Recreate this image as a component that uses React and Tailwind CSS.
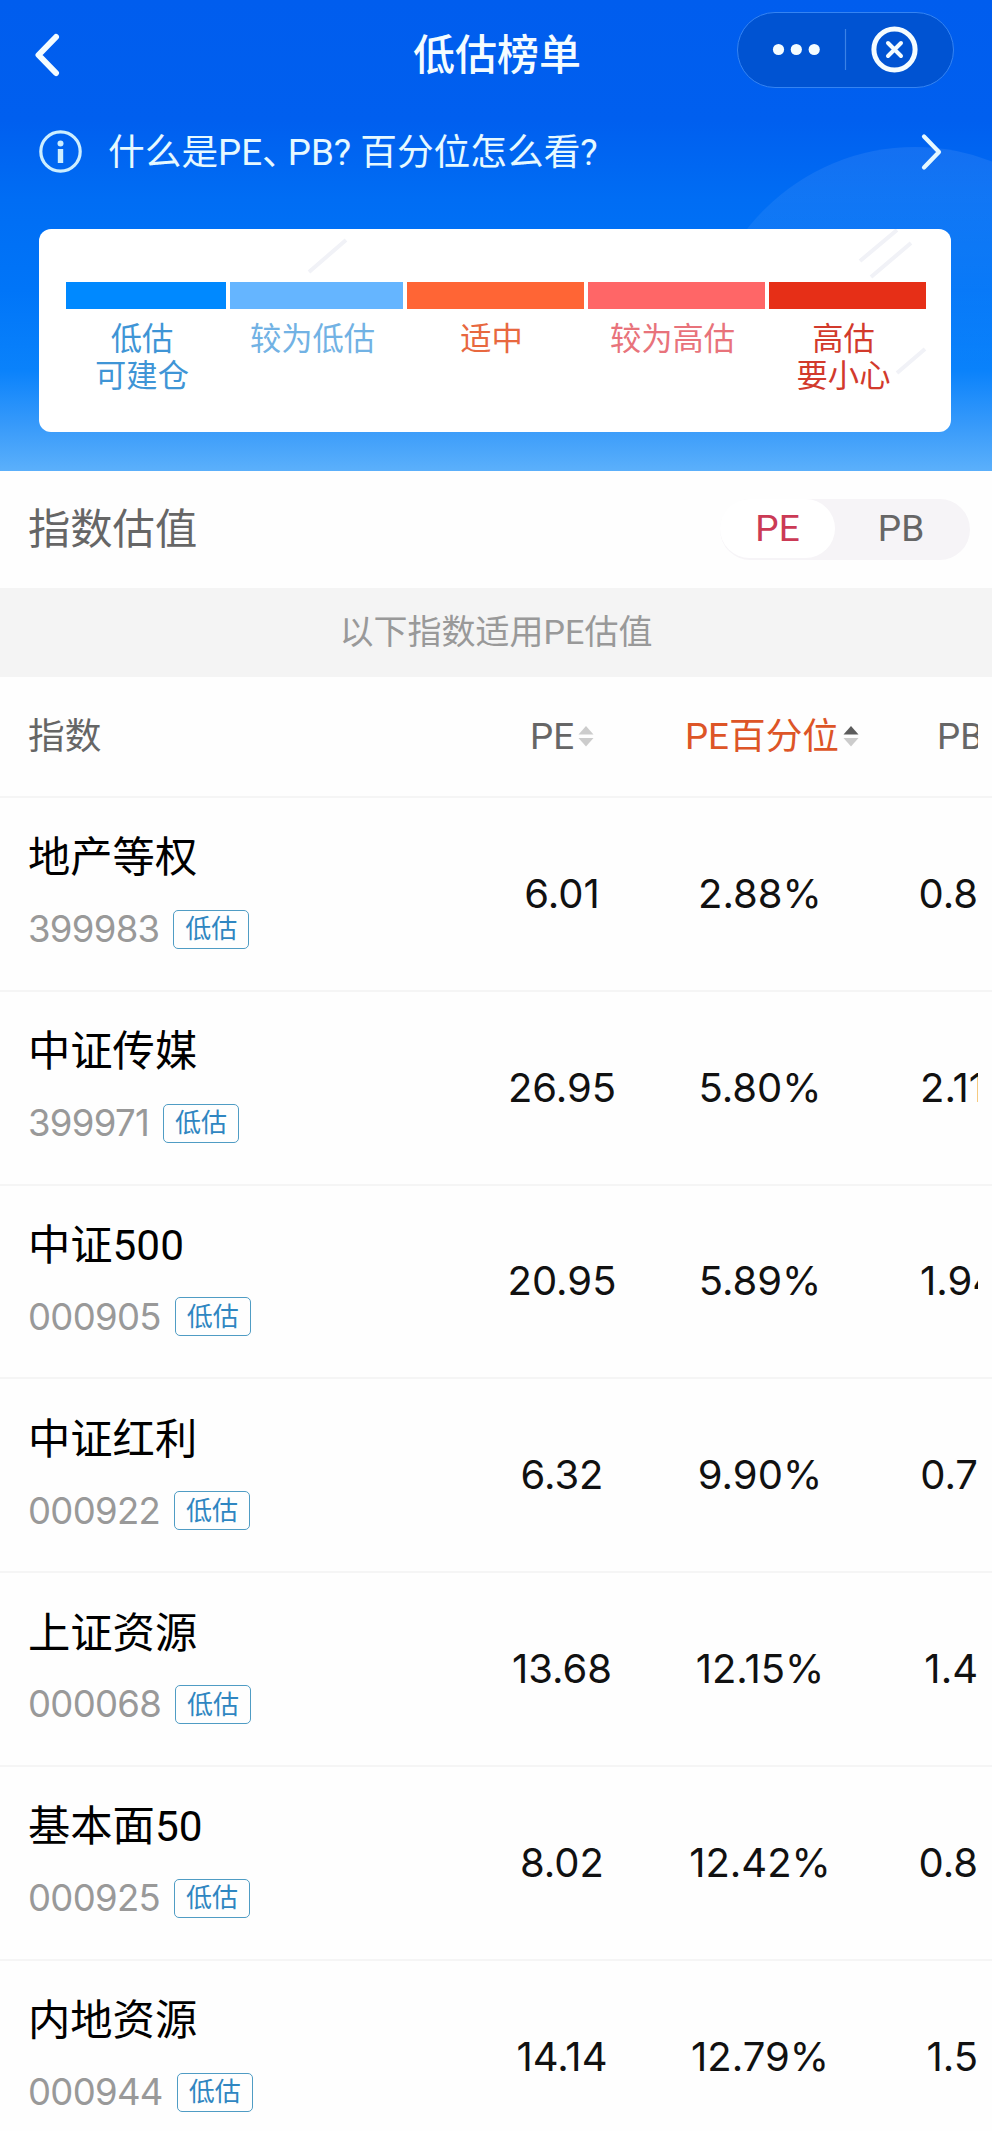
import React, { useState } from "react";

const levels = [
  { bar: "w-[160px] bg-[#0089ff]", text: "text-[#3f95d6]", label: ["低估", "可建仓"] },
  { bar: "w-[173px] bg-[#65b5ff]", text: "text-[#72b2e4]", label: ["较为低估"] },
  { bar: "w-[177px] bg-[#ff6535]", text: "text-[#e8683f]", label: ["适中"] },
  { bar: "w-[177px] bg-[#ff6667]", text: "text-[#e8737b]", label: ["较为高估"] },
  { bar: "w-[157px] bg-[#e62f17]", text: "text-[#d23a2c]", label: ["高估", "要小心"] },
];

const rows = [
  { name: "地产等权", code: "399983", pe: "6.01", percent: "2.88%", pb: "0.8" },
  { name: "中证传媒", code: "399971", pe: "26.95", percent: "5.80%", pb: "2.11" },
  { name: "中证500", code: "000905", pe: "20.95", percent: "5.89%", pb: "1.94" },
  { name: "中证红利", code: "000922", pe: "6.32", percent: "9.90%", pb: "0.7" },
  { name: "上证资源", code: "000068", pe: "13.68", percent: "12.15%", pb: "1.4" },
  { name: "基本面50", code: "000925", pe: "8.02", percent: "12.42%", pb: "0.8" },
  { name: "内地资源", code: "000944", pe: "14.14", percent: "12.79%", pb: "1.5" },
];

const SortArrows = ({ up }) => (
  <svg width="16" height="21" viewBox="0 0 16 21" className="flex-none">
    <path d="M8 0L15.5 8.5H0.5Z" fill={up ? "#5c5c5c" : "#cccccc"} />
    <path d="M8 20.5L15.5 12H0.5Z" fill="#cccccc" />
  </svg>
);

const TopBar = () => (
  <div className="relative flex h-[100px] justify-between pt-3 pr-[38px] pl-[34px]">
    <svg width="26" height="44" viewBox="0 0 26 44" className="mt-[21px]">
      <path
        d="M22 4L4.5 22L22 40"
        fill="none"
        stroke="#f4fcff"
        strokeWidth="6"
        strokeLinecap="round"
        strokeLinejoin="round"
      />
    </svg>
    <div className="absolute inset-x-0 top-[26px] text-center text-[42px] leading-[60px] font-medium">
      <span className="relative left-px">低估榜单</span>
    </div>
    <div className="flex h-[76px] w-[217px] items-center rounded-full border border-[#3584f2] bg-[#0053d2]">
      <svg width="215" height="74" viewBox="0 0 215 74">
        <g fill="#f4fcff">
          <circle cx="40.5" cy="36.5" r="5.6" />
          <circle cx="58.3" cy="36.5" r="5.6" />
          <circle cx="76.2" cy="36.5" r="5.6" />
        </g>
        <path d="M107.5 16V57" stroke="#3b82e6" strokeWidth="1.2" />
        <circle cx="156.5" cy="36.5" r="20.6" fill="none" stroke="#f4fcff" strokeWidth="5" />
        <path
          d="M150 30L163 43M163 30L150 43"
          stroke="#f4fcff"
          strokeWidth="4"
          strokeLinecap="round"
        />
      </svg>
    </div>
  </div>
);

const HelpLink = () => (
  <div className="flex h-[129px] items-start pr-[49px] pl-[38px]">
    <svg width="45" height="45" viewBox="0 0 45 45" className="mt-[29px]">
      <circle cx="22.5" cy="22.5" r="19.7" fill="none" stroke="#cdeeff" strokeWidth="3.2" />
      <circle cx="22.5" cy="14.5" r="3" fill="#cdeeff" />
      <path d="M22.5 20V34" stroke="#cdeeff" strokeWidth="5.4" />
    </svg>
    <div className="mt-[27px] ml-[25px] text-[36.7px] leading-[52px] whitespace-nowrap text-[#e6f9ff]">
      什么是PE<span className="-mr-[11px]">、</span>PB? 百分位怎么看?
    </div>
    <svg width="24" height="40" viewBox="0 0 24 40" className="mt-[32px] ml-auto">
      <path
        d="M5 4.5L20 20L5 35.5"
        fill="none"
        stroke="#e6f9ff"
        strokeWidth="4.2"
        strokeLinecap="round"
        strokeLinejoin="round"
      />
    </svg>
  </div>
);

const LevelCard = () => (
  <div className="relative mx-auto h-[203px] w-[912px] -translate-x-px rounded-xl bg-white pt-[53px] pl-[27px]">
    <svg className="absolute top-0 left-0" width="912" height="203" viewBox="0 0 912 203">
      <g stroke="#f1f2f7" strokeWidth="4">
        <path d="M270 43L307 11M821 32L858 1M832 48L872 14M858 144L886 120" />
      </g>
    </svg>
    <div className="relative flex gap-1">
      {levels.map((l) => (
        <div key={l.label[0]} className={`flex-none ${l.text}`}>
          <div className={`h-[27px] ${l.bar}`}></div>
          <div className="-ml-2 pt-3 text-center text-[31.3px] leading-[37px]">
            {l.label.map((t) => (
              <div key={t}>{t}</div>
            ))}
          </div>
        </div>
      ))}
    </div>
  </div>
);

const IndexRow = ({ row }) => (
  <div className="flex h-[193.8px] items-center border-t-2 border-[#f5f5f5] pr-[14px] pl-7">
    <div className="w-[434px] flex-none">
      <div className="text-[42.3px] leading-[60px] whitespace-nowrap text-black">{row.name}</div>
      <div className="mt-[11px] flex h-[60px] items-center gap-[14px]">
        <span className="font-[Inter] text-[36.5px] leading-none tracking-[-0.7px] text-[#999]">
          {row.code}
        </span>
        <span className="flex h-[39px] w-[76px] items-center justify-center rounded-[5px] border-[1.5px] border-[#4f9cc4] text-[26px] leading-none text-[#2f86c1]">
          低估
        </span>
      </div>
    </div>
    <div className="w-[200px] flex-none text-center font-[Inter] text-[40px] text-[#111]">{row.pe}</div>
    <div className="w-[196px] flex-none text-center font-[Inter] text-[40px] text-[#111]">
      {row.percent}
    </div>
    <div
      className={`ml-auto flex w-[58px] overflow-hidden font-[Inter] text-[40px] text-[#111] ${
        row.pb.length > 3 ? "justify-start" : "justify-end"
      }`}
    >
      {row.pb}
    </div>
  </div>
);

const App = () => {
  const [tab, setTab] = useState("PE");

  return (
    <div className="h-[2131px] w-[992px] overflow-hidden bg-[#fefefe] font-[Roboto,'Noto_Sans_CJK_SC',sans-serif]">
      <header className="relative h-[471px] overflow-hidden bg-[linear-gradient(180deg,#005dee_0px,#005fef_120px,#006df4_200px,#0075f8_290px,#0a82fb_370px,#3b9cfa_430px,#5bb0fb_471px)] text-[#f4fcff]">
        <div className="absolute top-[147px] left-[702px] h-[426px] w-[426px] rounded-full bg-[linear-gradient(180deg,#ffffff14_0px,#ffffff0f_80px,#ffffff00_220px)]"></div>
        <div className="relative">
          <TopBar />
          <HelpLink />
          <LevelCard />
        </div>
      </header>

      <div className="flex h-[117px] items-center justify-between pr-[22px] pl-7">
        <div className="text-[42.3px] text-[#666]">指数估值</div>
        <div className="flex h-[61px] w-[250px] rounded-full bg-[#f6f4f7]">
          {["PE", "PB"].map((t) => (
            <button
              key={t}
              onClick={() => setTab(t)}
              className={`h-[59px] rounded-full text-[37px] ${
                tab === t ? "w-[115px] bg-white text-[#cb3a55]" : "w-[132px] text-[#666]"
              }`}
            >
              {t}
            </button>
          ))}
        </div>
      </div>

      <div className="flex h-[89px] items-center justify-center bg-[#f4f4f4] text-[34px] text-[#999]">
        以下指数适用PE估值
      </div>

      <div className="flex h-[119px] items-center pr-[14px] pl-7 text-[36.7px] text-[#666]">
        <div className="w-[434px] flex-none">指数</div>
        <div className="flex w-[200px] flex-none items-center justify-center gap-1">
          PE
          <SortArrows />
        </div>
        <div className="flex w-[220px] flex-none items-center justify-center gap-1 text-[#dd5527]">
          PE百分位
          <SortArrows up />
        </div>
        <div className="ml-auto w-[41px] overflow-hidden">PB</div>
      </div>

      {rows.map((row) => (
        <IndexRow key={row.code} row={row} />
      ))}
    </div>
  );
};

export default App;
